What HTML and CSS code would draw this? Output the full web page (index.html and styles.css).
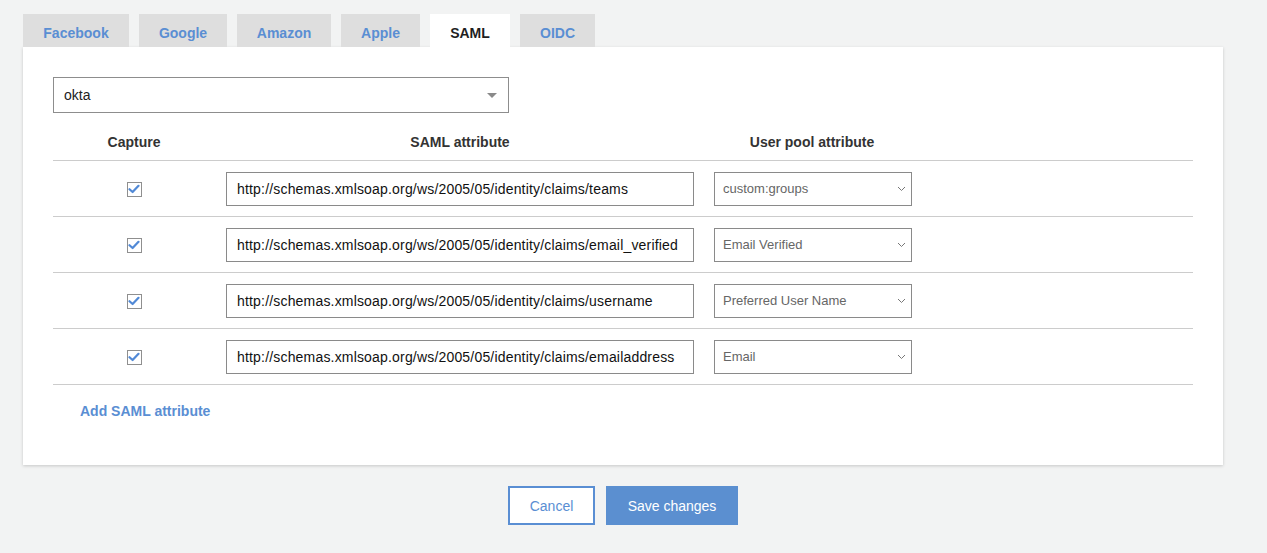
FILE: index.html
```html
<!DOCTYPE html>
<html>
<head>
<meta charset="utf-8">
<link rel="stylesheet" href="styles.css">
</head>
<body>
<div class="page">
  <div class="tabs">
    <div class="tab">Facebook</div>
    <div class="tab">Google</div>
    <div class="tab">Amazon</div>
    <div class="tab">Apple</div>
    <div class="tab active">SAML</div>
    <div class="tab">OIDC</div>
  </div>
  <div class="panel">
    <div class="provider">
      <span>okta</span>
      <span class="caret"></span>
    </div>
    <div class="table">
      <div class="row head">
        <div class="c1">Capture</div>
        <div class="c2">SAML attribute</div>
        <div class="c3">User pool attribute</div>
      </div>
      <div class="row">
        <div class="c1"><span class="check"><svg width="12" height="10" viewBox="0 0 12 10"><path d="M1.5 5.2 L4.6 8 L10.5 1.8" fill="none" stroke="#5189d6" stroke-width="2.2" stroke-linecap="round" stroke-linejoin="round"/></svg></span></div>
        <div class="c2"><div class="input">http://schemas.xmlsoap.org/ws/2005/05/identity/claims/teams</div></div>
        <div class="c3"><div class="select"><span>custom:groups</span><svg width="9" height="6" viewBox="0 0 9 6"><path d="M1 1 L4.5 4.5 L8 1" fill="none" stroke="#777" stroke-width="1"/></svg></div></div>
      </div>
      <div class="row">
        <div class="c1"><span class="check"><svg width="12" height="10" viewBox="0 0 12 10"><path d="M1.5 5.2 L4.6 8 L10.5 1.8" fill="none" stroke="#5189d6" stroke-width="2.2" stroke-linecap="round" stroke-linejoin="round"/></svg></span></div>
        <div class="c2"><div class="input">http://schemas.xmlsoap.org/ws/2005/05/identity/claims/email_verified</div></div>
        <div class="c3"><div class="select"><span>Email Verified</span><svg width="9" height="6" viewBox="0 0 9 6"><path d="M1 1 L4.5 4.5 L8 1" fill="none" stroke="#777" stroke-width="1"/></svg></div></div>
      </div>
      <div class="row">
        <div class="c1"><span class="check"><svg width="12" height="10" viewBox="0 0 12 10"><path d="M1.5 5.2 L4.6 8 L10.5 1.8" fill="none" stroke="#5189d6" stroke-width="2.2" stroke-linecap="round" stroke-linejoin="round"/></svg></span></div>
        <div class="c2"><div class="input">http://schemas.xmlsoap.org/ws/2005/05/identity/claims/username</div></div>
        <div class="c3"><div class="select"><span>Preferred User Name</span><svg width="9" height="6" viewBox="0 0 9 6"><path d="M1 1 L4.5 4.5 L8 1" fill="none" stroke="#777" stroke-width="1"/></svg></div></div>
      </div>
      <div class="row">
        <div class="c1"><span class="check"><svg width="12" height="10" viewBox="0 0 12 10"><path d="M1.5 5.2 L4.6 8 L10.5 1.8" fill="none" stroke="#5189d6" stroke-width="2.2" stroke-linecap="round" stroke-linejoin="round"/></svg></span></div>
        <div class="c2"><div class="input">http://schemas.xmlsoap.org/ws/2005/05/identity/claims/emailaddress</div></div>
        <div class="c3"><div class="select"><span>Email</span><svg width="9" height="6" viewBox="0 0 9 6"><path d="M1 1 L4.5 4.5 L8 1" fill="none" stroke="#777" stroke-width="1"/></svg></div></div>
      </div>
    </div>
    <div class="add">Add SAML attribute</div>
  </div>
  <div class="actions">
    <div class="btn cancel">Cancel</div>
    <div class="btn save">Save changes</div>
  </div>
</div>
</body>
</html>
```

FILE: styles.css
```css
* { box-sizing: border-box; }
html, body { margin: 0; padding: 0; }
body {
  background: #f2f3f3;
  font-family: "Liberation Sans", Arial, Helvetica, sans-serif;
  font-size: 14px;
  color: #222;
}
.page {
  width: 1200px;
  margin-left: 23px;
  padding-top: 14px;
}
.tabs {
  display: flex;
  gap: 10px;
  height: 33px;
}
.tab {
  background: #dedede;
  color: #5a8ed3;
  font-weight: bold;
  font-size: 14px;
  padding: 0 20px;
  display: flex;
  align-items: center;
  justify-content: center;
  padding-top: 4px;
}
.tab:nth-child(1) { width: 106px; }
.tab:nth-child(2) { width: 88px; }
.tab:nth-child(3) { width: 94px; }
.tab:nth-child(4) { width: 79px; }
.tab:nth-child(5) { width: 80px; }
.tab:nth-child(6) { width: 75px; }
.tab.active {
  background: #fff;
  color: #1f1f1f;
}
.panel {
  background: #fff;
  box-shadow: 0 1px 3px rgba(0,0,0,0.18);
  padding: 30px 30px 0 30px;
  height: 418px;
}
.provider {
  width: 456px;
  height: 36px;
  border: 1px solid #8d8d8d;
  display: flex;
  align-items: center;
  justify-content: space-between;
  padding: 0 11px 0 10px;
  font-size: 14px;
  color: #222;
}
.caret {
  width: 0;
  height: 0;
  border-left: 5px solid transparent;
  border-right: 5px solid transparent;
  border-top: 5px solid #8a8a8a;
}
.table {
  margin-top: 12px;
}
.row {
  display: grid;
  grid-template-columns: 162px 489px 218px 1fr;
  height: 56px;
  border-bottom: 1px solid #cccccc;
  align-items: center;
}
.row.head {
  height: 36px;
  font-weight: bold;
  color: #333;
  padding-bottom: 2px;
}
.row.head .c1, .row.head .c2, .row.head .c3 { text-align: center; }
.row.head .c3 { padding-right: 12px; }
.c1 { display: flex; justify-content: center; }
.c2 { padding: 0 10px 0 11px; }
.c3 { padding: 0 10px; }
.check {
  width: 15px;
  height: 15px;
  border: 1px solid #8f8f8f;
  display: flex;
  align-items: center;
  justify-content: center;
  margin-top: 1px;
}
.input {
  height: 34px;
  border: 1px solid #8a8a8a;
  display: flex;
  align-items: center;
  padding: 0 10px;
  font-size: 14px;
  letter-spacing: 0.18px;
  color: #111;
  white-space: nowrap;
  overflow: hidden;
}
.select {
  width: 198px;
  height: 34px;
  border: 1px solid #8a8a8a;
  display: flex;
  align-items: center;
  justify-content: space-between;
  padding: 0 5px 0 8px;
  font-size: 13px;
  color: #666;
}
.add {
  margin: 18px 0 0 27px;
  color: #5a8ed3;
  font-weight: bold;
  font-size: 14px;
}
.actions {
  display: flex;
  justify-content: center;
  gap: 11px;
  margin-top: 21px;
}
.btn {
  height: 39px;
  display: flex;
  align-items: center;
  justify-content: center;
  font-size: 14px;
}
.cancel {
  width: 87px;
  border: 2px solid #5a8ed3;
  color: #5a8ed3;
  background: #fff;
}
.save {
  width: 132px;
  background: #5b8fd0;
  color: #fff;
}
```
